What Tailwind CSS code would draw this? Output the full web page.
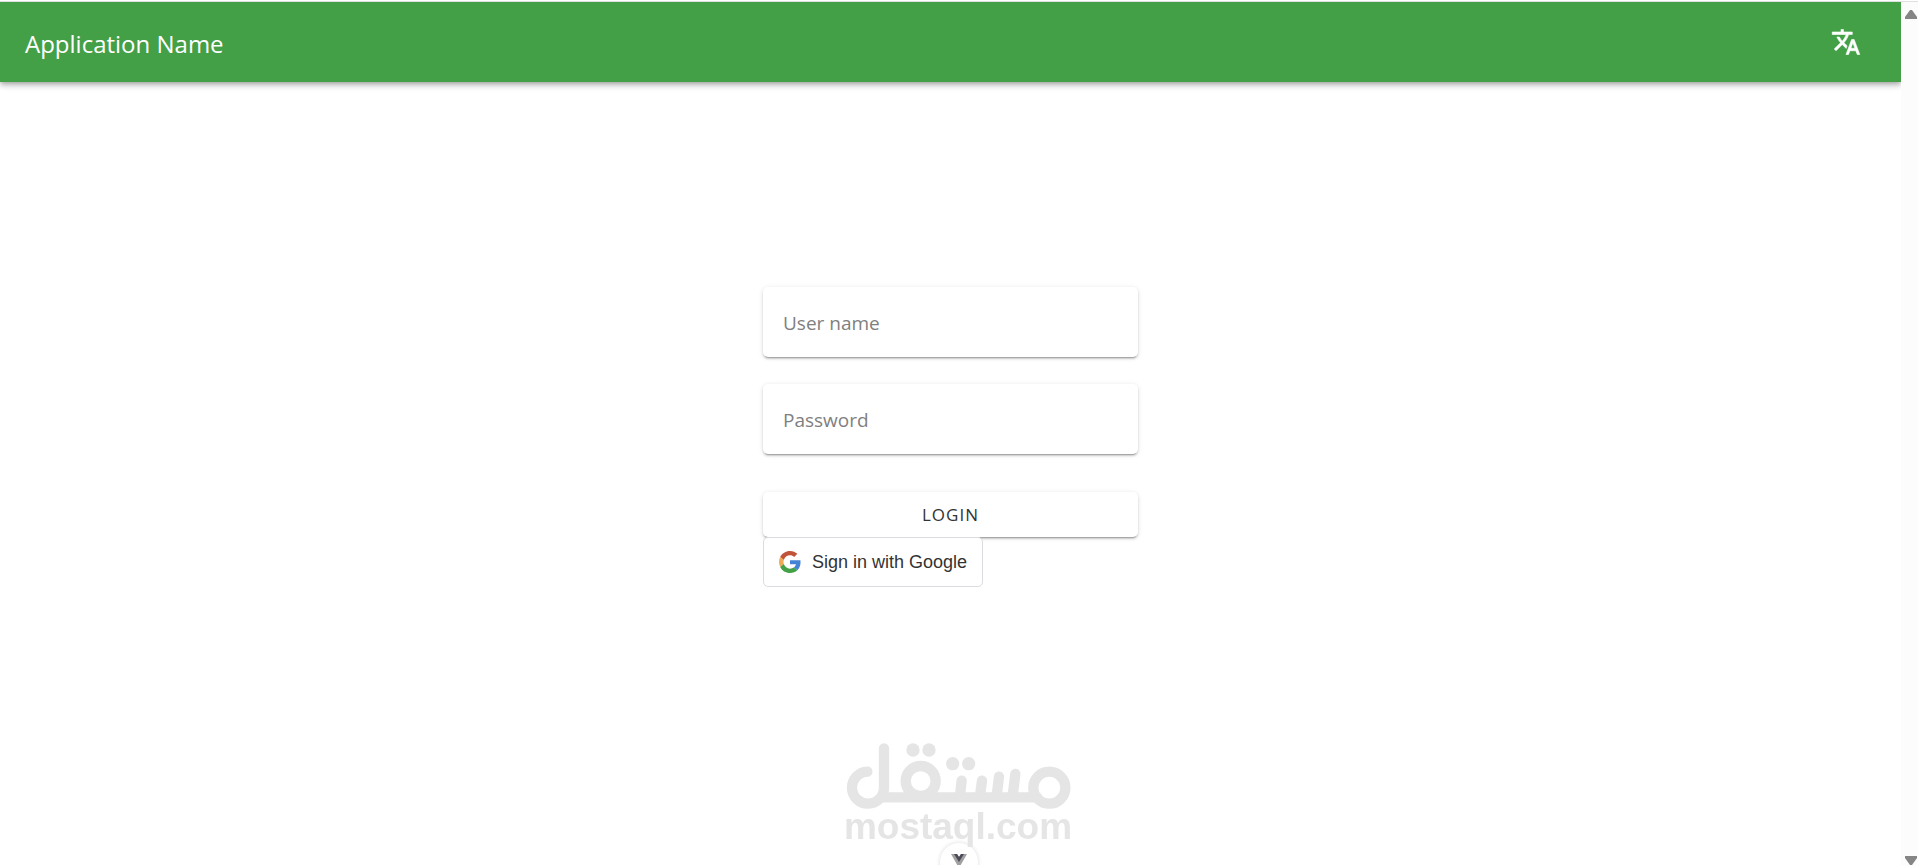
<!DOCTYPE html>
<html lang="en">
<head>
  <meta charset="UTF-8" />
  <meta name="viewport" content="width=device-width, initial-scale=1.0"/>
  <title>Application Name</title>
  <script src="https://cdn.jsdelivr.net/npm/@tailwindcss/browser@4"></script>
</head>
<body class="h-screen overflow-hidden bg-white font-['Open_Sans','Noto_Sans',sans-serif] flex flex-col">
  <div class="h-[2px] shrink-0 border-b border-[#e0e0e0]"></div>

  <div class="flex flex-1 min-h-0">
    <div class="flex-1 flex flex-col min-w-0 overflow-hidden">
      <!-- App bar -->
      <header class="h-20 shrink-0 bg-[#43a047] text-white flex items-center justify-between pl-[25px] pr-10 shadow-[0_2px_4px_-1px_rgba(0,0,0,0.2),0_4px_5px_0_rgba(0,0,0,0.14),0_1px_10px_0_rgba(0,0,0,0.12)]">
        <h1 class="text-2xl pt-1">Application Name</h1>
        <button type="button" aria-label="Change language">
          <svg class="w-[30px] h-[30px]" viewBox="0 0 24 24" fill="currentColor" stroke="currentColor" stroke-width="0.5"><path d="M12.87,15.07L10.33,12.56L10.36,12.53C12.1,10.59 13.34,8.36 14.07,6H17V4H10V2H8V4H1V6H12.17C11.5,7.92 10.44,9.75 9,11.35C8.07,10.32 7.3,9.19 6.69,8H4.69C5.42,9.63 6.42,11.17 7.67,12.56L2.58,17.58L4,19L9,14L12.11,17.11L12.87,15.07M18.5,10H16.5L12,22H14L15.12,19H19.87L21,22H23L18.5,10M15.88,17L17.5,12.67L19.12,17H15.88Z"/></svg>
        </button>
      </header>

      <!-- Login form -->
      <main class="flex-1 flex flex-col items-center pt-[205px] px-4">
        <form class="w-full max-w-[375px]">
          <input type="text" aria-label="User name" placeholder="User name" class="block w-full h-[70px] mb-[27px] px-5 pt-[2px] rounded-[5px] bg-white text-[19px] text-[#212121] placeholder:text-[#808080] outline-none shadow-[0_3px_1px_-2px_rgba(0,0,0,0.2),0_2px_2px_0_rgba(0,0,0,0.14),0_1px_5px_0_rgba(0,0,0,0.12)]">
          <input type="password" aria-label="Password" placeholder="Password" class="block w-full h-[70px] mb-[38px] px-5 pt-[2px] rounded-[5px] bg-white text-[19px] text-[#212121] placeholder:text-[#808080] outline-none shadow-[0_3px_1px_-2px_rgba(0,0,0,0.2),0_2px_2px_0_rgba(0,0,0,0.14),0_1px_5px_0_rgba(0,0,0,0.12)]">
          <button type="submit" class="block w-full h-[45px] rounded-[5px] bg-white text-[17px] tracking-[1px] text-[#333333] shadow-[0_3px_1px_-2px_rgba(0,0,0,0.2),0_2px_2px_0_rgba(0,0,0,0.14),0_1px_5px_0_rgba(0,0,0,0.12)]">LOGIN</button>
          <button type="button" class="relative h-[50px] px-[15px] pb-px flex items-center gap-[11px] rounded-[5px] border border-[#dadce0] bg-white font-['Liberation_Sans',Arial,sans-serif] text-lg text-[#333333]">
            <svg class="w-[22px] h-[22px]" viewBox="0 0 48 48">
              <path fill="#c0533a" d="M24 9.5c3.54 0 6.71 1.22 9.21 3.6l6.85-6.85C35.9 2.38 30.47 0 24 0 14.62 0 6.51 5.38 2.56 13.22l7.98 6.19C12.43 13.72 17.74 9.5 24 9.5z"/>
              <path fill="#4584d4" d="M46.98 24.55c0-1.57-.15-3.09-.38-4.55H24v9.02h12.94c-.58 2.96-2.26 5.48-4.78 7.18l7.73 6c4.51-4.18 7.09-10.36 7.09-17.65z"/>
              <path fill="#edaa57" d="M10.53 28.59c-.48-1.45-.76-2.99-.76-4.59s.27-3.14.76-4.59l-7.98-6.19C.92 16.46 0 20.12 0 24c0 3.88.92 7.54 2.56 10.78l7.97-6.19z"/>
              <path fill="#43a047" d="M24 48c6.48 0 11.93-2.13 15.89-5.81l-7.73-6c-2.15 1.45-4.92 2.3-8.16 2.3-6.26 0-11.57-4.22-13.47-9.91l-7.98 6.19C6.51 42.62 14.62 48 24 48z"/>
            </svg>
            Sign in with Google
          </button>
        </form>
      </main>
    </div>

    <!-- Scroll track -->
    <div class="w-[17px] shrink-0 bg-[#fcfcfc] flex flex-col items-end justify-between pt-2">
      <svg class="w-[14px] h-[10px]" viewBox="0 0 14 10" fill="#858585"><path d="M6 0H8L13 7V9H1V7Z"/></svg>
      <svg class="w-[14px] h-[9px]" viewBox="0 0 14 9" fill="#858585"><path d="M1 0H13V2L8 9H6L1 2Z"/></svg>
    </div>
  </div>

  <!-- Devtools badge, half below the window edge -->
  <div class="fixed -bottom-4 left-1/2 -translate-x-1/2 w-[38px] h-[38px] rounded-full bg-white flex items-start justify-center pt-[11px] shadow-[0_0_4px_rgba(0,0,0,0.15)]">
    <svg class="w-4 h-[14px]" viewBox="0 0 16 14"><path fill="#a0a0a0" d="M0 0H6L8 3L10 0H16L8 14Z"/><path fill="#4b4b58" d="M3 0H6L8 3L10 0H13L8 8Z"/></svg>
  </div>

  <!-- Watermark -->
  <div class="fixed inset-x-0 bottom-4 pr-[2px] flex flex-col items-center pointer-events-none text-[#e5e5e5]">
    <svg class="w-[225px] h-[66px]" viewBox="48 42 675 198" fill="none" stroke="currentColor" stroke-width="31" stroke-linecap="round">
      <path d="M112 128A48 48 0 1 0 162 176V58"/>
      <path d="M162 205H622"/>
      <circle cx="658" cy="176" r="48"/>
      <circle cx="272" cy="156" r="45"/>
      <path d="M395 155L390 200M456 155L450 200M507 143L500 200M556 135L548 200"/>
      <g fill="currentColor" stroke="none">
        <circle cx="249" cy="63" r="20"/>
        <circle cx="297" cy="63" r="20"/>
        <circle cx="368" cy="104" r="20"/>
        <circle cx="416" cy="104" r="20"/>
      </g>
    </svg>
    <span class="font-['Liberation_Sans',Arial,sans-serif] font-bold text-[37px] leading-9 pb-1">mostaql.com</span>
  </div>
</body>
</html>
